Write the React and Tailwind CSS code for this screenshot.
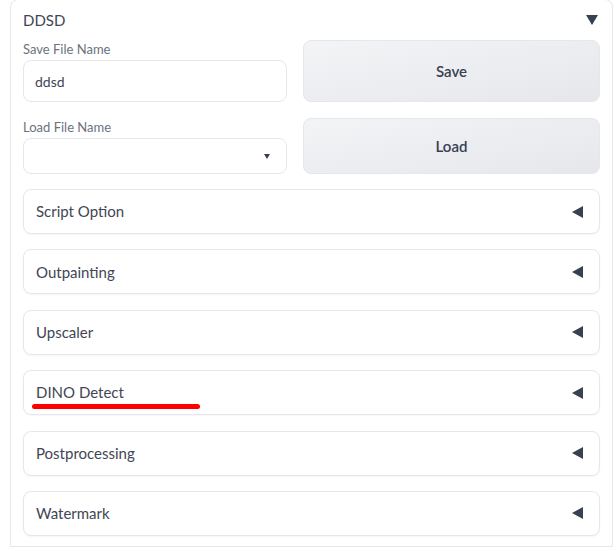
import { useState } from "react";

function TriLeft() {
  return (
    <svg width="11" height="12" viewBox="0 0 11 12" className="shrink-0">
      <path d="M0 6 L11 0 L11 12 Z" fill="#374151" />
    </svg>
  );
}

function TriDown({ w = 12, h = 10 }) {
  return (
    <svg width={w} height={h} viewBox="0 0 12 10" className="shrink-0">
      <path d="M0 0 L12 0 L6 10 Z" fill="#374151" />
    </svg>
  );
}

function Accordion({ label, marked }) {
  return (
    <div className="relative h-[45px] flex items-center justify-between rounded-lg border border-[#e5e7eb] bg-white pl-[12px] pr-[16px] shadow-[0_1px_2px_rgba(0,0,0,0.04)]">
      <span className="text-[15px] text-[#3f4654]">{label}</span>
      <TriLeft />
      {marked && (
        <div className="absolute left-[8px] top-[33px] h-[5px] w-[168px] rounded-full bg-[#ff0000]" />
      )}
    </div>
  );
}

export default function App() {
  const [saveName, setSaveName] = useState("ddsd");
  const sections = [
    "Script Option",
    "Outpainting",
    "Upscaler",
    "DINO Detect",
    "Postprocessing",
    "Watermark",
  ];

  return (
    <div
      className="w-[616px] h-[551px] bg-white overflow-hidden"
      style={{ fontFamily: '"Source Sans Pro", Lato, "Noto Sans", sans-serif' }}
    >
      <div className="ml-[10px] mt-[-1px] w-[603px] h-[548px] border border-[#e5e7eb] rounded-t-lg px-[12px] pt-[10px]">
        <div className="flex items-center justify-between h-[20px] pr-[2px]">
          <span className="text-[15px] text-[#3f4654]">DDSD</span>
          <TriDown />
        </div>

        <div className="grid grid-cols-[264px_1fr] gap-x-[16px] mt-[10px]">
          <div className="flex flex-col">
            <span className="text-[13px] leading-[18px] text-[#6b7280]">Save File Name</span>
            <input
              value={saveName}
              onChange={(e) => setSaveName(e.target.value)}
              className="mt-[2px] h-[42px] rounded-lg border border-[#e5e7eb] px-[11px] text-[14px] text-[#3f4654] outline-none"
            />
          </div>
          <button className="h-[62px] rounded-lg border border-[#e5e7eb] bg-gradient-to-br from-[#f3f4f6] to-[#e5e7eb] text-[15px] font-semibold text-[#374151]">
            Save
          </button>

          <div className="flex flex-col mt-[16px]">
            <span className="text-[13px] leading-[18px] text-[#6b7280]">Load File Name</span>
            <div className="mt-[2px] h-[36px] rounded-lg border border-[#e5e7eb] flex items-center justify-end pr-[15px]">
              <TriDown w={8} h={5} />
            </div>
          </div>
          <button className="mt-[16px] h-[56px] rounded-lg border border-[#e5e7eb] bg-gradient-to-br from-[#f3f4f6] to-[#e5e7eb] text-[15px] font-semibold text-[#374151]">
            Load
          </button>
        </div>

        <div className="flex flex-col gap-[15.4px] mt-[15px]">
          {sections.map((s) => (
            <Accordion key={s} label={s} marked={s === "DINO Detect"} />
          ))}
        </div>
      </div>
    </div>
  );
}
